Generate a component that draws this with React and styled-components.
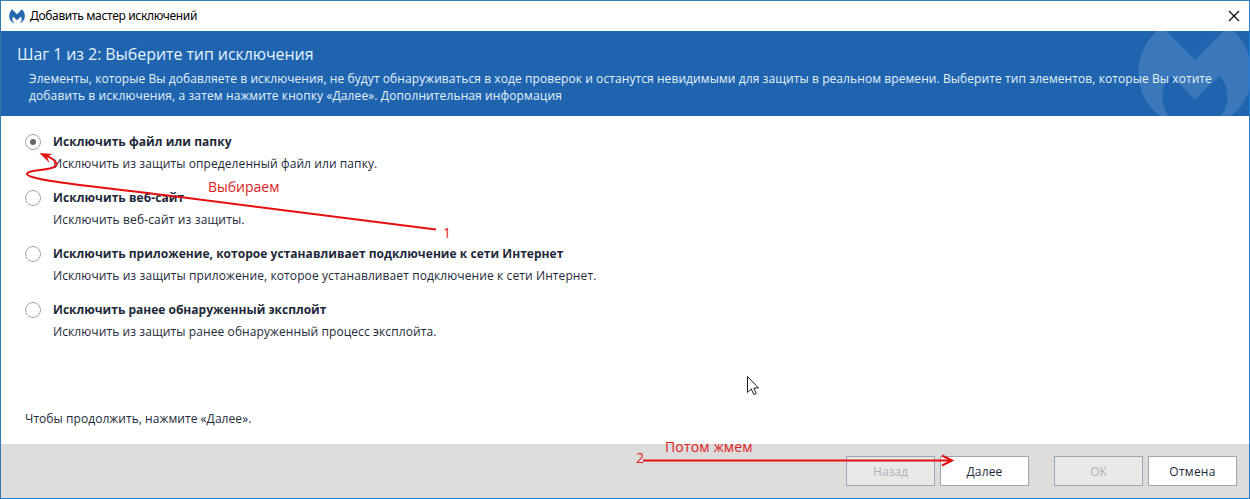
import React from "react";
import styled, { createGlobalStyle } from "styled-components";

const GlobalStyle = createGlobalStyle`
  *, *::before, *::after { box-sizing: border-box; }
  body { margin: 0; overflow: hidden; }
`;

const Window = styled.div`
  position: relative;
  display: flex;
  flex-direction: column;
  width: 1250px;
  height: 499px;
  border: 1px solid #1f7fd0;
  border-top-color: #3c7fb5;
  border-left-color: #3577ad;
  background: #fff;
  color: #1d2939;
  font-family: "Open Sans", "Noto Sans", sans-serif;
  font-size: 12px;
  white-space: nowrap;
`;

const TitleBar = styled.header`
  display: flex;
  align-items: center;
  height: 30px;
  padding: 0 9px 0 8px;
  color: #000;
`;

const Caption = styled.span`
  flex: 1;
  margin-left: 5px;
  font-family: "Noto Sans", sans-serif;
  font-size: 12px;
  line-height: 16px;
  letter-spacing: ${(p) => p.$track}px;
`;

const Banner = styled.section`
  position: relative;
  height: 85px;
  padding: 12px 16px 0;
  overflow: hidden;
  background: #1f64af;
  color: #e4f1fd;
`;

const Watermark = styled.svg`
  position: absolute;
  top: 0;
  right: 0;
`;

const Heading = styled.h1`
  position: relative;
  margin: 0;
  font-size: 16px;
  font-weight: 400;
  line-height: 22px;
  letter-spacing: ${(p) => p.$track}px;
`;

const Lead = styled.p`
  position: relative;
  margin: 5px 0 0 12px;
  line-height: 17px;
`;

const Line = styled.span`
  display: block;
  letter-spacing: ${(p) => p.$track || 0}px;
`;

const Body = styled.main`
  flex: 1;
  padding: 17px 24px 0;
`;

const Option = styled.label`
  display: grid;
  grid-template-columns: 16px 1fr;
  column-gap: 12px;
  height: 56px;
  align-content: start;
`;

const Radio = styled.span`
  display: grid;
  place-items: center;
  width: 16px;
  height: 16px;
  margin-top: 1px;
  border: 1px solid #a3a3a3;
  border-radius: 50%;

  &::after {
    content: "";
    width: 6px;
    height: 6px;
    border-radius: 50%;
    background: ${(p) => (p.$checked ? "#666" : "transparent")};
  }
`;

const OptionName = styled.strong`
  font-weight: 700;
  line-height: 18px;
  letter-spacing: ${(p) => p.$track}px;
`;

const OptionText = styled.span`
  grid-column: 2;
  margin-top: 4px;
  line-height: 18px;
  letter-spacing: ${(p) => p.$track}px;
`;

const Hint = styled.p`
  margin: 53px 0 0;
  line-height: 18px;
  letter-spacing: ${(p) => p.$track}px;
`;

const Footer = styled.footer`
  display: flex;
  justify-content: flex-end;
  gap: 5px;
  height: 54px;
  padding: 12px 12px 0;
  background: #dcdcdc;
`;

const Button = styled.button`
  width: 89px;
  height: 30px;
  margin: 0 ${(p) => (p.$gapAfter ? 20 : 0)}px 0 0;
  padding: 0;
  border: 1px solid #9fa6af;
  border-radius: 0;
  background: ${(p) => (p.disabled ? "#e9e9e9" : "#fff")};
  color: ${(p) => (p.disabled ? "#aeb0b2" : "#1d2939")};
  font: inherit;
  letter-spacing: ${(p) => p.$track || 0}px;
`;

const Overlay = styled.svg`
  position: absolute;
  top: -1px;
  left: -1px;
  pointer-events: none;
`;

const Note = styled.span`
  position: absolute;
  left: ${(p) => p.$x - 1}px;
  top: ${(p) => p.$y - 1}px;
  color: #e01b1b;
  font-size: 14px;
  line-height: 18px;
  letter-spacing: ${(p) => p.$track || 0}px;
`;

const options = [
  {
    name: "Исключить файл или папку",
    nameTrack: 0.06,
    text: "Исключить из защиты определенный файл или папку.",
    textTrack: 0.085,
    checked: true,
  },
  { name: "Исключить веб-сайт", nameTrack: 0.06, text: "Исключить веб-сайт из защиты.", textTrack: 0.14 },
  {
    name: "Исключить приложение, которое устанавливает подключение к сети Интернет",
    nameTrack: 0.035,
    text: "Исключить из защиты приложение, которое устанавливает подключение к сети Интернет.",
    textTrack: 0.1,
  },
  {
    name: "Исключить ранее обнаруженный эксплойт",
    nameTrack: 0,
    text: "Исключить из защиты ранее обнаруженный процесс эксплойта.",
    textTrack: 0.09,
  },
];

function Logo() {
  return (
    <svg width="16" height="15" viewBox="0 0 16 15">
      <path
        fill="#2467ad"
        d="M3 0.300 L8 5.200 L13 0.300 C17.200 4.500 17 11.600 10.800 14.600 C12.800 12.300 13.200 9.800 12 7.600 L8 11.200 L4 7.600 C2.800 9.800 3.200 12.300 5.800 14.400 C-.8 12.400 -1.300 4.700 3 0.300 Z"
      />
    </svg>
  );
}

export default function App() {
  return (
    <>
      <GlobalStyle />
      <Window>
        <TitleBar>
          <Logo />
          <Caption $track={-0.33}>Добавить мастер исключений</Caption>
          <svg width="12" height="12" viewBox="0 0 12 12">
            <path d="M1 1 L11 11 M11 1 L1 11" stroke="#000" strokeWidth="1.1" />
          </svg>
        </TitleBar>
        <Banner>
          <Watermark width="111" height="85" viewBox="0 0 111 85">
            <path
              fill="#3b78b9"
              d="M18.700 0 H28 L57 29 L86 0 H95.300 C104 8 109 17 111 26 V59 C108 70 101 79 92 85 H83 C92 74 92 55 81 45 L57 68.500 L33 45 C22 55 22 74 31 85 H22 C-7 63 -6 23 18.700 0 Z"
            />
          </Watermark>
          <Heading $track={-0.08}>Шаг 1 из 2: Выберите тип исключения</Heading>
          <Lead>
            <Line $track={0.078}>
              Элементы, которые Вы добавляете в исключения, не будут обнаруживаться в ходе проверок и останутся невидимыми для защиты в реальном времени. Выберите тип элементов, которые Вы хотите
            </Line>
            <Line $track={0.115}>
              добавить в исключения, а затем нажмите кнопку «Далее». Дополнительная информация
            </Line>
          </Lead>
        </Banner>
        <Body>
          {options.map((o) => (
            <Option key={o.name}>
              <Radio $checked={o.checked} />
              <OptionName $track={o.nameTrack}>{o.name}</OptionName>
              <OptionText $track={o.textTrack}>{o.text}</OptionText>
            </Option>
          ))}
          <Hint $track={0.06}>Чтобы продолжить, нажмите «Далее».</Hint>
        </Body>
        <Footer>
          <Button disabled>Назад</Button>
          <Button $gapAfter $track={0.15}>Далее</Button>
          <Button disabled>OK</Button>
          <Button $track={0.25}>Отмена</Button>
        </Footer>

        <Overlay width="1250" height="499" viewBox="0 0 1250 499" fill="none">
          <g stroke="#e60f0f" strokeWidth="2">
            <path d="M436 229.500 L180 197 C110 188 28 181 27 174 C27 169 57 171 56.500 164 C56 160 50 157 43 154.500" />
            <path d="M643 460.500 H950" />
            <path d="M942 455.500 L952 460.500 L942 465.500" />
          </g>
          <path d="M39.500 153 L52.500 154 L47 156.500 L49.500 163 Z" fill="#e60f0f" />
          <path
            d="M747.500 376.500 V392.500 L751.200 389 L753.800 394.500 L756.200 393.500 L753.800 388 H758.500 Z"
            fill="#fff"
            stroke="#222"
          />
        </Overlay>
        <Note $x={208} $y={178}>Выбираем</Note>
        <Note $x={443} $y={224}>1</Note>
        <Note $x={665} $y={438} $track={0.15}>Потом жмем</Note>
        <Note $x={636} $y={449}>2</Note>
      </Window>
    </>
  );
}
